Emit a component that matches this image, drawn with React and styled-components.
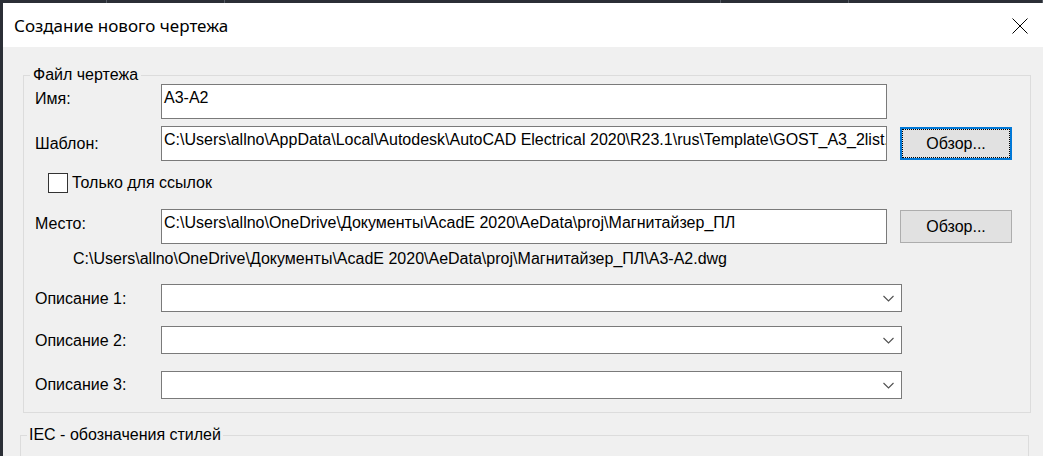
import React from "react";
import styled, { createGlobalStyle } from "styled-components";

const GlobalStyle = createGlobalStyle`
  html, body { margin: 0; padding: 0; background: #f0f0f0; overflow: hidden; }
  body { font-family: "Liberation Sans", Arial, sans-serif; color: #000; }
  * { box-sizing: border-box; }
`;

const Screen = styled.div`
  width: 1043px;
  height: 456px;
  display: flex;
  flex-direction: column;
  background: #2b2f36;
  overflow: hidden;
`;

const TopStrip = styled.div`
  height: 3px;
  flex: none;
  display: flex;
`;

const StripSeg = styled.div`
  flex: none;
  width: ${(p) => p.$w}px;
  border-right: 1px solid #555a63;
`;

const Main = styled.div`
  flex: 1;
  display: flex;
  min-height: 0;
`;

const LeftStrip = styled.div`
  width: 3px;
  flex: none;
  background: #2b2f36;
`;

const Dialog = styled.div`
  flex: 1;
  min-width: 0;
  display: flex;
  flex-direction: column;
  background: #f0f0f0;
`;

const TitleBar = styled.div`
  height: 44px;
  flex: none;
  background: #fff;
  display: flex;
  align-items: center;
  justify-content: space-between;
  padding: 1px 15px 0 11px;
`;

const Title = styled.div`
  font-family: "Noto Sans", "Open Sans", sans-serif;
  font-size: 17px;
  line-height: 22px;
  margin-top: 1px;
  color: #000;
`;

const CloseIcon = styled.svg`
  display: block;
  width: 16px;
  height: 16px;
`;

const Body = styled.div`
  flex: 1;
  display: flex;
  flex-direction: column;
`;

const Group = styled.fieldset`
  margin: ${(p) => p.$mt}px 0 0 ${(p) => p.$ml}px;
  width: ${(p) => p.$w}px;
  min-width: 0;
  min-height: ${(p) => p.$minH || 0}px;
  border: 1px solid #dcdcdc;
  padding: 0 0 13px 6px;
  flex: none;
`;

const Legend = styled.legend`
  padding: 0 ${(p) => p.$px}px;
  font-size: 16px;
  line-height: 18px;
  color: #000;
`;

const Fields = styled.div`
  display: flex;
  flex-direction: column;
  margin-left: 5px;
`;

const Row = styled.div`
  display: flex;
  align-items: center;
  height: ${(p) => p.$h}px;
  margin-top: ${(p) => p.$mt}px;
`;

const Label = styled.div`
  flex: none;
  width: 126px;
  font-size: 16px;
  line-height: 18px;
  position: relative;
  top: ${(p) => p.$dy || 0}px;
`;

const TextBox = styled.div`
  flex: none;
  width: 726px;
  height: 35px;
  border: 1px solid #7a7a7a;
  background: #fff;
  padding: 4px 2px 0 2px;
  font-size: 16px;
  line-height: 18px;
  white-space: nowrap;
  overflow: hidden;
`;

const Button = styled.div`
  flex: none;
  position: relative;
  margin-left: 13px;
  width: 112px;
  height: 33px;
  background: #e1e1e1;
  border: ${(p) => (p.$focused ? "2px solid #0078d7" : "1px solid #adadad")};
  display: flex;
  align-items: center;
  justify-content: center;
  font-size: 16px;
  line-height: 18px;

  &::after {
    content: "";
    display: ${(p) => (p.$focused ? "block" : "none")};
    position: absolute;
    inset: 0;
    border: 1px dotted #000;
  }
`;

const CheckRow = styled.div`
  display: flex;
  align-items: center;
  height: 20px;
  margin-top: ${(p) => p.$mt}px;
  padding-left: 13px;
`;

const CheckBox = styled.span`
  flex: none;
  width: 20px;
  height: 20px;
  border: 1px solid #333;
  background: #fff;
`;

const CheckLabel = styled.span`
  margin-left: 4px;
  font-size: 16px;
  line-height: 18px;
`;

const PathText = styled.div`
  margin-top: ${(p) => p.$mt}px;
  padding-left: 38px;
  font-size: 16px;
  line-height: 18px;
  white-space: nowrap;
`;

const Combo = styled.div`
  flex: none;
  width: 741px;
  height: 28px;
  border: 1px solid #7a7a7a;
  background: #fff;
  display: flex;
  align-items: center;
  justify-content: flex-end;
  padding-right: 7px;
`;

const Chevron = styled.svg`
  display: block;
  width: 11px;
  height: 7px;
`;

function ComboRow({ label, mt, dy }) {
  return (
    <Row $h={28} $mt={mt}>
      <Label $dy={dy}>{label}</Label>
      <Combo>
        <Chevron viewBox="0 0 11 7">
          <path d="M0.5 1 L5.5 6 L10.5 1" fill="none" stroke="#505050" strokeWidth="1.1" />
        </Chevron>
      </Combo>
    </Row>
  );
}

export default function App() {
  return (
    <>
      <GlobalStyle />
      <Screen>
        <TopStrip>
          <StripSeg $w={107} />
          <StripSeg $w={118} />
          <StripSeg $w={496} />
          <StripSeg $w={128} />
          <StripSeg $w={194} />
        </TopStrip>
        <Main>
          <LeftStrip />
          <Dialog>
            <TitleBar>
              <Title>Создание нового чертежа</Title>
              <CloseIcon viewBox="0 0 16 16">
                <path d="M0.5 0.5 L15.5 15.5 M15.5 0.5 L0.5 15.5" stroke="#000" strokeWidth="1" fill="none" />
              </CloseIcon>
            </TitleBar>
            <Body>
              <Group $mt={19} $ml={20} $w={1008}>
                <Legend $px={3}>Файл чертежа</Legend>
                <Fields>
                  <Row $h={35} $mt={0}>
                    <Label $dy={-3}>Имя:</Label>
                    <TextBox>A3-A2</TextBox>
                  </Row>
                  <Row $h={35} $mt={7}>
                    <Label>Шаблон:</Label>
                    <TextBox>
                      C:\Users\allno\AppData\Local\Autodesk\AutoCAD Electrical 2020\R23.1\rus\Template\GOST_A3_2list.dwt
                    </TextBox>
                    <Button $focused>Обзор...</Button>
                  </Row>
                  <CheckRow $mt={12}>
                    <CheckBox />
                    <CheckLabel>Только для ссылок</CheckLabel>
                  </CheckRow>
                  <Row $h={35} $mt={16}>
                    <Label $dy={-3}>Место:</Label>
                    <TextBox>
                      C:\Users\allno\OneDrive\Документы\AcadE 2020\AeData\proj\Магнитайзер_ПЛ
                    </TextBox>
                    <Button>Обзор...</Button>
                  </Row>
                  <PathText $mt={6}>
                    C:\Users\allno\OneDrive\Документы\AcadE 2020\AeData\proj\Магнитайзер_ПЛ\A3-A2.dwg
                  </PathText>
                  <ComboRow label="Описание 1:" mt={16} dy={1} />
                  <ComboRow label="Описание 2:" mt={14} dy={1} />
                  <ComboRow label="Описание 3:" mt={17} />
                </Fields>
              </Group>
              <Group $mt={13} $ml={17} $w={1009} $minH={120}>
                <Legend $px={2}>IEC - обозначения стилей</Legend>
              </Group>
            </Body>
          </Dialog>
        </Main>
      </Screen>
    </>
  );
}
